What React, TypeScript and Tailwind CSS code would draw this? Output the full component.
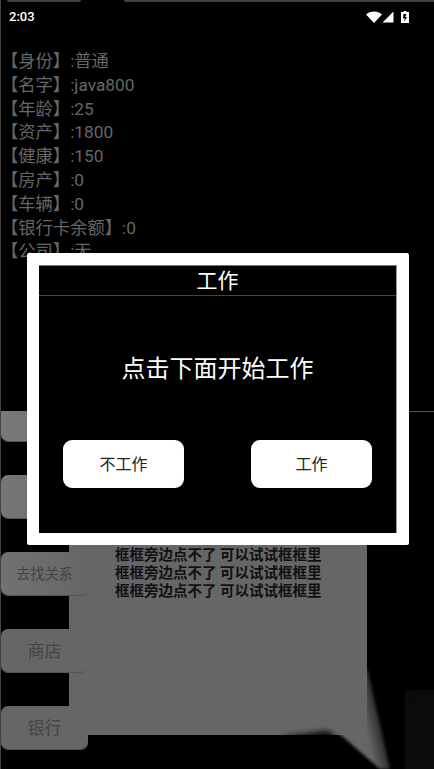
const cjk = 'font-["Roboto","Noto_Sans_CJK_SC",sans-serif]'

const stats = [
    '【身份】:普通',
    '【名字】:java800',
    '【年龄】:25',
    '【资产】:1800',
    '【健康】:150',
    '【房产】:0',
    '【车辆】:0',
    '【银行卡余额】:0',
    '【公司】:无',
]

const sideButtons = [
    { label: '', className: 'from-[#7a7a7a] to-[#666666]' },
    { label: '', className: 'from-[#777777] to-[#666666]' },
    { label: '去找关系', className: 'from-[#727272] to-[#666666] text-[14.300px]' },
    { label: '商店', className: 'from-[#666666] to-[#666666] text-[17px]' },
    { label: '银行', className: 'from-[#666666] to-[#666666] text-[17px]' },
]

function StatusBar(): JSX.Element {
    return (
        <div className="flex h-[29px] items-center justify-between pl-2 pr-[25px] text-white">
            <span className="text-[13px] font-medium">2:03</span>
            <div className="flex items-center">
                <svg width="16" height="12" viewBox="0 0 16 12" fill="white">
                    <path d="M0 3.500C2 1.500 5 0.500 8 0.500s6 1 8 3L8 12z" />
                </svg>
                <svg width="12" height="12" viewBox="0 0 12 12" fill="white">
                    <path d="M11.500 0.500V11.500H0.500z" />
                </svg>
                <svg className="ml-[7px]" width="8" height="12" viewBox="0 0 8 12">
                    <path d="M2.500 0h3v1H8v11H0V1h2.500z" fill="white" />
                    <path d="M2.500 3h3L4.200 6H6L3.200 10.500l0.500-3.300H2z" fill="black" />
                </svg>
            </div>
        </div>
    )
}

function WorkDialog(): JSX.Element {
    return (
        <div className="absolute left-[26px] top-[253px] h-[292px] w-[382px] rounded-[2px] bg-white p-3">
            <div className="flex h-full flex-col border-r border-t border-r-[#999] border-t-[#777] bg-black text-white">
                <div className="flex h-[30px] items-center justify-center border-b border-[#444] pt-[2px] text-[21px] leading-none">
                    工作
                </div>
                <div className="flex h-[144px] items-center justify-center pt-[2px] text-[24px]">点击下面开始工作</div>
                <div className="flex justify-between px-6">
                    <button className="h-12 w-[121px] rounded-[9px] bg-white pt-[2px] text-[16px] text-[#222]">不工作</button>
                    <button className="h-12 w-[121px] rounded-[9px] bg-white pt-[2px] text-[16px] text-[#222]">工作</button>
                </div>
            </div>
        </div>
    )
}

// the curled corner at the bottom right of the grey box
function CornerCurl(): JSX.Element {
    return (
        <svg className="absolute left-[269px] top-[239px]" width="164" height="119" viewBox="0 0 164 119">
            <defs>
                <filter id="soft" filterUnits="userSpaceOnUse" x="-20" y="-20" width="220" height="180">
                    <feGaussianBlur stdDeviation="3" />
                </filter>
                <filter id="thin" filterUnits="userSpaceOnUse" x="-20" y="-20" width="220" height="180">
                    <feGaussianBlur stdDeviation="1.500" />
                </filter>
                <filter id="wide" filterUnits="userSpaceOnUse" x="0" y="-40" width="280" height="280">
                    <feGaussianBlur stdDeviation="18" />
                </filter>
                <linearGradient id="wedge" gradientUnits="userSpaceOnUse" x1="94" y1="72" x2="120" y2="66">
                    <stop offset="0" stopColor="#666666" />
                    <stop offset="1" stopColor="#666666" stopOpacity="0" />
                </linearGradient>
            </defs>
            <path d="M135 40H230V190H135z" fill="#070707" filter="url(#wide)" />
            <path d="M15 87L58 81L110 125H15z" fill="black" filter="url(#soft)" />
            <path d="M97 17L120 119H110L58 74L90 40z" fill="url(#wedge)" filter="url(#thin)" />
        </svg>
    )
}

export default function App(): JSX.Element {
    return (
        <div className={`relative flex h-[769px] w-[434px] flex-col overflow-hidden border-l border-[#444] bg-black ${cjk}`}>
            <div className="flex h-[411px] flex-col">
                <div className="flex h-[2px] pl-[6px]">
                    <div className="w-[74px] rounded-b-[2px] bg-[#444]" />
                    <div className="ml-[43px] flex-1 rounded-bl-[2px] bg-[#444]" />
                </div>
                <StatusBar />
                <div className="mt-[19px] overflow-hidden text-[17.300px] leading-[23.800px] text-[#666]">
                    {stats.map((line) => (
                        <div key={line}>{line}</div>
                    ))}
                </div>
            </div>
            <div className="relative flex-1 overflow-hidden">
                <div className="h-px bg-[#555]" />
                <div className="ml-[68px] h-[323px] w-[298px] bg-[#666]">
                    <div className="pl-[46px] pt-[135px] text-[14.500px] font-bold leading-[18px] text-[#111]">
                        <div>框框旁边点不了 可以试试框框里</div>
                        <div>框框旁边点不了 可以试试框框里</div>
                        <div>框框旁边点不了 可以试试框框里</div>
                    </div>
                </div>
                <CornerCurl />
                <div className="absolute left-0 top-[-13px] flex w-[87px] flex-col gap-[34px]">
                    {sideButtons.map((b, i) => (
                        <div
                            key={i}
                            className={`flex h-[43px] items-center justify-center rounded-[7px] bg-gradient-to-r pt-[3px] text-[#444] shadow-[0_1px_0_#555] ${b.className}`}
                        >
                            {b.label}
                        </div>
                    ))}
                </div>
            </div>
            <WorkDialog />
        </div>
    )
}
